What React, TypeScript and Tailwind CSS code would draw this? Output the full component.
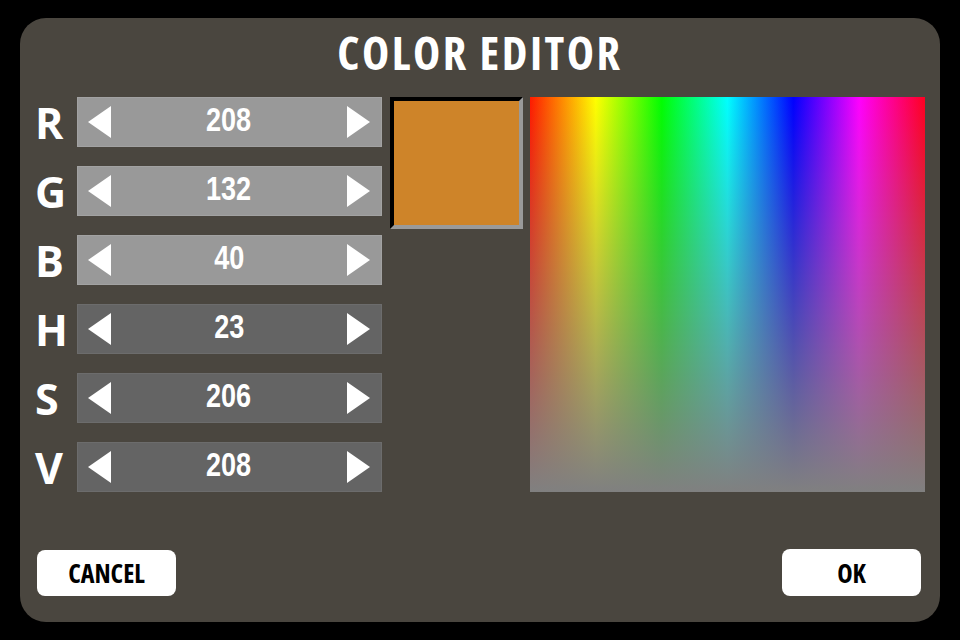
import React from "react";

type Channel = {
	label: string;
	value: number;
	tone: "light" | "dark";
};

const channels: Channel[] = [
	{ label: "R", value: 208, tone: "light" },
	{ label: "G", value: 132, tone: "light" },
	{ label: "B", value: 40, tone: "light" },
	{ label: "H", value: 23, tone: "dark" },
	{ label: "S", value: 206, tone: "dark" },
	{ label: "V", value: 208, tone: "dark" },
];

const condensed = "font-['Open_Sans',sans-serif] font-stretch-[75%]";

const LeftArrow = () => (
	<svg width="23" height="32" viewBox="0 0 23 32" className="shrink-0">
		<polygon points="23,0 23,32 0,16" fill="#ffffff" />
	</svg>
);

const RightArrow = () => (
	<svg width="23" height="32" viewBox="0 0 23 32" className="shrink-0">
		<polygon points="0,0 23,16 0,32" fill="#ffffff" />
	</svg>
);

const Spinner = ({ channel }: { channel: Channel }) => (
	<div className="flex items-center h-[50px]">
		<span className="w-[42px] text-[43px] leading-none font-bold text-white font-['Open_Sans',sans-serif]">
			{channel.label}
		</span>
		<div
			className={
				channel.tone === "light"
					? "w-[305px] h-[50px] flex items-center justify-between pl-[10px] pr-[11px] bg-[#999999] border border-[#a2a2a2]"
					: "w-[305px] h-[50px] flex items-center justify-between pl-[10px] pr-[11px] bg-[#646464] border border-[#6c6c6c]"
			}
		>
			<LeftArrow />
			<span className="mb-[6px] scale-x-[0.82] text-[33px] leading-none font-bold text-white font-['Liberation_Sans',sans-serif]">
				{channel.value}
			</span>
			<RightArrow />
		</div>
	</div>
);

export default function App() {
	return (
		<div className="w-[960px] h-[640px] bg-black px-[20px] py-[18px]">
			<div className="w-[920px] h-[604px] rounded-[26px] bg-[#4a463f] flex flex-col">
				<h1 className={`pt-[11px] h-[58px] text-center text-[46px] tracking-[2.5px] leading-none font-bold text-white ${condensed}`}>
					COLOR EDITOR
				</h1>

				<div className="mt-[21px] flex items-start pl-[15px]">
					<div className="flex flex-col gap-[19px]">
						{channels.map((channel) => (
							<Spinner key={channel.label} channel={channel} />
						))}
					</div>

					<div className="ml-[8px] w-[133px] h-[132px] border-4 border-t-black border-l-black border-r-[#9a9a9a] border-b-[#9a9a9a] bg-[#ce8429]" />

					<div className="ml-[7px] w-[395px] h-[395px] bg-[linear-gradient(to_bottom,rgba(128,128,128,0),#808080),linear-gradient(to_right,#ff1a00,#ffff00,#00ff00,#00ffff,#0000ff,#ff00ff,#ff0020)]" />
				</div>

				<div className="mt-auto mb-[26px] flex items-end justify-between pl-[17px] pr-[19px]">
					<button className={`w-[139px] h-[46px] rounded-[8px] bg-white text-black text-[26px] font-bold leading-none ${condensed}`}>
						CANCEL
					</button>
					<button className={`w-[139px] h-[47px] rounded-[8px] bg-white text-black text-[26px] font-bold leading-none ${condensed}`}>
						OK
					</button>
				</div>
			</div>
		</div>
	);
}
